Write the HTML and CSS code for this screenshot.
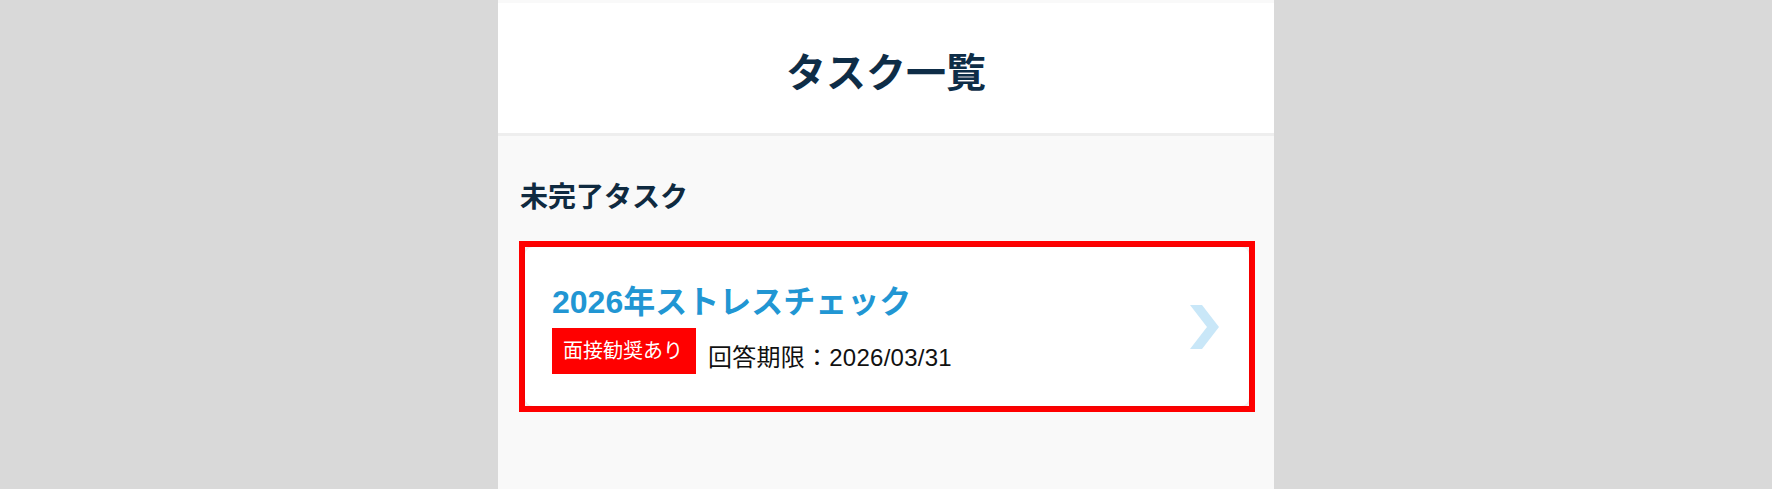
FILE: index.html
```html
<!DOCTYPE html>
<html lang="ja">
<head>
<meta charset="utf-8">
<title>タスク一覧</title>
<link rel="stylesheet" href="styles.css">
</head>
<body>
<div class="panel">
  <header class="page-header">
    <h1 class="page-title">タスク一覧</h1>
  </header>
  <main class="content">
    <h2 class="section-title">未完了タスク</h2>
    <div class="highlight">
      <a class="task-card" href="#">
        <div class="task-body">
          <div class="task-name">2026年ストレスチェック</div>
          <div class="task-meta">
            <span class="badge">面接勧奨あり</span>
            <span class="deadline">回答期限：2026/03/31</span>
          </div>
        </div>
        <svg class="chevron" width="30" height="44" viewBox="0 0 30 44" aria-hidden="true">
          <polygon points="1,0 13,0 30,22 13,44 1,44 18,22" fill="#c9e7f8"/>
        </svg>
      </a>
    </div>
  </main>
</div>
</body>
</html>
```

FILE: styles.css
```css
* {
  box-sizing: border-box;
}

html, body {
  margin: 0;
  padding: 0;
}

body {
  background: #d9d9d9;
  font-family: "Liberation Sans", "Noto Sans CJK JP", sans-serif;
  min-height: 100vh;
}

.panel {
  width: 776px;
  margin: 0 auto;
  min-height: 100vh;
  background: #f9f9f9;
  padding-top: 3px;
}

.page-header {
  background: #ffffff;
  padding: 50px 0 40px;
  border-bottom: 3px solid #eeeeee;
}

.page-title {
  margin: 0;
  font-size: 40px;
  line-height: 40px;
  font-weight: bold;
  text-align: center;
  color: #0e2d47;
}

.content {
  padding: 48px 19px 0 21px;
}

.section-title {
  margin: 0 0 29px;
  font-size: 28px;
  line-height: 28px;
  font-weight: bold;
  color: #0f2a40;
  padding-left: 1px;
}

.highlight {
  border: 6px solid #ff0000;
  background: #f9f9f9;
}

.task-card {
  display: flex;
  align-items: center;
  background: #ffffff;
  border-radius: 8px;
  box-shadow: 0 0 4px rgba(0, 0, 0, 0.12);
  padding: 33px 30px 32px 27px;
  text-decoration: none;
}

.task-body {
  flex: 1;
  display: flex;
  flex-direction: column;
}

.task-name {
  font-size: 32px;
  line-height: 44px;
  font-weight: bold;
  color: #2196d3;
  margin-bottom: 4px;
}

.task-meta {
  display: flex;
  align-items: flex-end;
  gap: 12px;
}

.badge {
  display: block;
  background: #ff0000;
  color: #ffffff;
  font-size: 20px;
  line-height: 46px;
  height: 46px;
  padding: 0 13px 0 11px;
}

.deadline {
  display: block;
  font-size: 24px;
  line-height: 32px;
  letter-spacing: 0.25px;
  color: #111111;
}

.chevron {
  display: block;
  flex: none;
}
```
